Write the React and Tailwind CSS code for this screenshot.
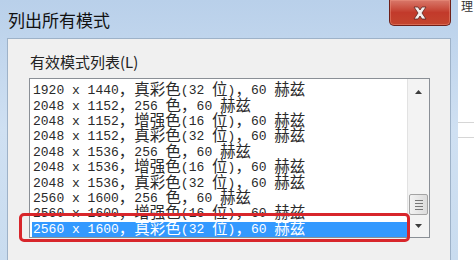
import React from 'react';

const modes = [
  '1920 x 1440，真彩色(32 位)，60 赫兹',
  '2048 x 1152，256 色，60 赫兹',
  '2048 x 1152，增强色(16 位)，60 赫兹',
  '2048 x 1152，真彩色(32 位)，60 赫兹',
  '2048 x 1536，256 色，60 赫兹',
  '2048 x 1536，增强色(16 位)，60 赫兹',
  '2048 x 1536，真彩色(32 位)，60 赫兹',
  '2560 x 1600，256 色，60 赫兹',
  '2560 x 1600，增强色(16 位)，60 赫兹',
  '2560 x 1600，真彩色(32 位)，60 赫兹',
];

const cjk = /([\u3000-\u9fff\uff00-\uffef]+)/;

// SimSun-ish: half-width latin in mono, wide CJK glyphs a bit larger
const ModeText = ({ text }) =>
  text
    .split(cjk)
    .filter(Boolean)
    .map((part, i) =>
      cjk.test(part) ? (
        <span key={i} className="mb-[4px] font-['Noto_Sans_CJK_SC',sans-serif] text-[15.5px] leading-[15px]">
          {part}
        </span>
      ) : (
        <span key={i} className="leading-[15px]">{part}</span>
      )
    );

const Arrow = ({ up }) => (
  <svg width="9" height="6" viewBox="0 0 9 6">
    {up ? <path d="M4.5 1 L8 5 L1 5 Z" fill="#3c3c3c" /> : <path d="M1 1 L8 1 L4.5 5 Z" fill="#3c3c3c" />}
  </svg>
);

export default function App() {
  const selected = modes.length - 1;

  return (
    <div className="relative w-[474px] h-[260px] overflow-hidden bg-white flex">
      {/* window */}
      <div className="w-[458px] h-full flex flex-col px-[7px] bg-gradient-to-b from-[#b9d0ea] via-[#cfe0f2] to-[#c9dcef]">
        {/* title bar */}
        <div className="h-[38px] flex items-start shrink-0">
          <div className="pt-[9px] pl-[1px] text-[17px] leading-[22px] text-[#111] font-['Noto_Sans_CJK_SC',sans-serif]">
            列出所有模式
          </div>
          <div className="ml-auto w-[62px] h-[26px] rounded-b-[5px] border border-t-0 border-[#6e1f18] bg-gradient-to-b from-[#d9786a] via-[#c23a2b] to-[#c4452e] flex items-center justify-center shadow-[inset_0_0_0_1px_rgba(240,150,130,0.45)]">
            <svg width="16" height="14" viewBox="0 0 16 14">
              <path
                d="M2 1 H6 L8 4 L10 1 H14 L10 7 L14 13 H10 L8 10 L6 13 H2 L6 7 Z"
                fill="#f4f0ee"
                stroke="#5a2520"
                strokeWidth="0.8"
                strokeLinejoin="round"
              />
            </svg>
          </div>
        </div>

        {/* client area */}
        <div className="flex-1 border-l border-t border-r border-[#9eb2c8] bg-[#f0f0f0] pt-[14px] pl-[21px]">
          <div className="ml-[1px] text-[15px] leading-[18px] text-[#222] font-['Noto_Sans_CJK_SC',sans-serif]">
            有效模式列表(L)
          </div>
          <div className="mt-[7px] w-[401px] h-[160px] border border-[#8a8f96] bg-white flex">
            <div className="flex-1 pt-[4px] pl-[2px] overflow-hidden font-['Liberation_Mono',monospace] text-[13px] text-[#2a2a2a]">
              {modes.map((m, i) => (
                <div
                  key={m}
                  className={
                    i === selected
                      ? 'h-[15.4px] pl-[1px] flex items-center whitespace-pre bg-[#3399ff] text-white'
                      : 'h-[15.4px] pl-[1px] flex items-center whitespace-pre'
                  }
                >
                  <ModeText text={m} />
                </div>
              ))}
            </div>
            {/* scrollbar */}
            <div className="w-[22px] border-l border-[#e2e2e2] bg-[#f3f3f3] flex flex-col items-center">
              <div className="h-[26px] flex items-center justify-center">
                <Arrow up />
              </div>
              <div className="flex-1 w-full flex flex-col justify-end px-[1px]">
                <div className="h-[21px] rounded-[2px] border border-[#a3a3a3] bg-gradient-to-r from-[#f2f2f2] to-[#dcdcdc] flex flex-col items-center justify-center gap-[2px]">
                  <div className="w-[8px] h-[1px] bg-[#777]" />
                  <div className="w-[8px] h-[1px] bg-[#777]" />
                  <div className="w-[8px] h-[1px] bg-[#777]" />
                  <div className="w-[8px] h-[1px] bg-[#777]" />
                </div>
              </div>
              <div className="h-[22px] flex items-center justify-center">
                <Arrow />
              </div>
            </div>
          </div>
        </div>
      </div>

      {/* what shows behind the window */}
      <div className="flex-1 flex flex-col">
        <div className="h-[14px] pl-[3px] text-[12px] leading-[12px] text-[#333] font-['Noto_Sans_CJK_SC',sans-serif]">理</div>
        <div className="mt-[108px] h-[1px] bg-[#d6d6d6]" />
        <div className="mt-[14px] h-[1px] bg-[#d6d6d6]" />
      </div>

      {/* red annotation box */}
      <div className="absolute left-[19px] top-[213px] w-[391px] h-[29px] rounded-[5px] border-[3.5px] border-[#d8262b]" />
    </div>
  );
}
